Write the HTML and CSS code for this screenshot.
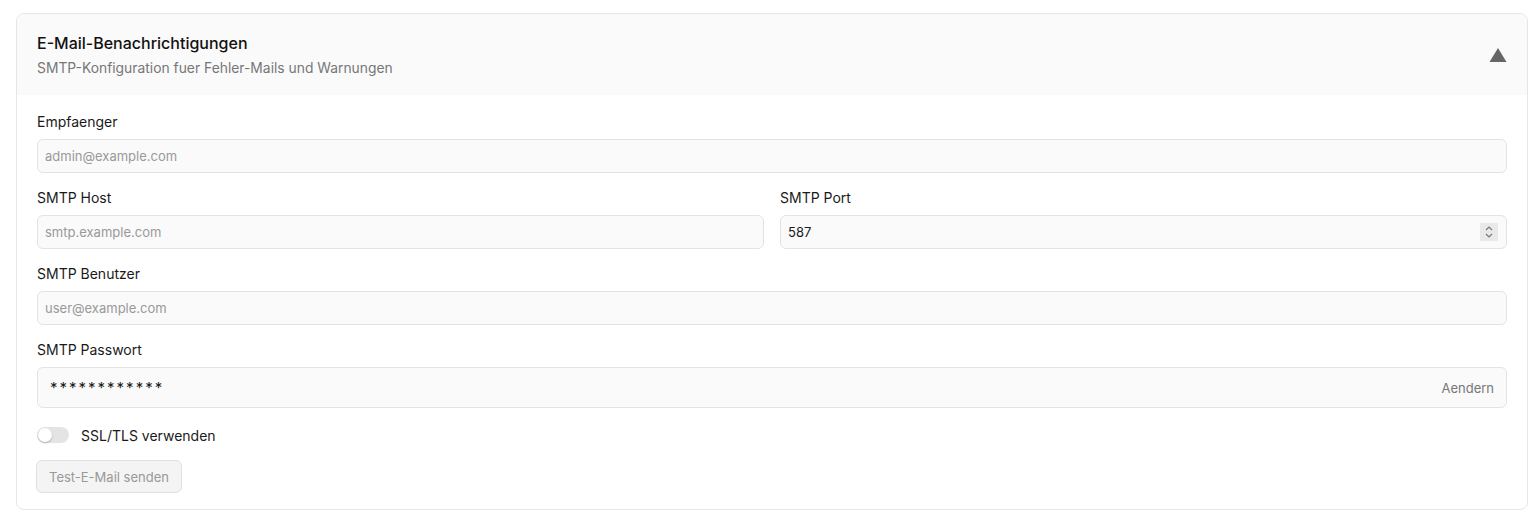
FILE: index.html
```html
<!DOCTYPE html>
<html lang="de">
<head>
<meta charset="utf-8">
<title>E-Mail-Benachrichtigungen</title>
<link rel="stylesheet" href="styles.css">
</head>
<body>
<section class="card">
  <header class="card-head">
    <div class="head-text">
      <h2 class="title">E-Mail-Benachrichtigungen</h2>
      <p class="subtitle">SMTP-Konfiguration fuer Fehler-Mails und Warnungen</p>
    </div>
    <svg class="caret" width="18" height="14" viewBox="0 0 18 14"><polygon points="9,0 17.5,14 0.5,14" fill="#666"/></svg>
  </header>
  <div class="card-body">
    <div class="field">
      <label class="label">Empfaenger</label>
      <div class="input"><span class="ph">admin@example.com</span></div>
    </div>
    <div class="row">
      <div class="field">
        <label class="label">SMTP Host</label>
        <div class="input"><span class="ph">smtp.example.com</span></div>
      </div>
      <div class="field">
        <label class="label">SMTP Port</label>
        <div class="input"><span class="val">587</span>
          <span class="spin"><svg width="10" height="14" viewBox="0 0 10 14"><path d="M2 5 L5 2 L8 5 M2 9 L5 12 L8 9" fill="none" stroke="#777" stroke-width="1.2"/></svg></span>
        </div>
      </div>
    </div>
    <div class="field">
      <label class="label">SMTP Benutzer</label>
      <div class="input"><span class="ph">user@example.com</span></div>
    </div>
    <div class="field">
      <label class="label">SMTP Passwort</label>
      <div class="input pw"><span class="stars">************</span><span class="change">Aendern</span></div>
    </div>
    <div class="toggle-row">
      <span class="toggle"><span class="knob"></span></span>
      <span class="toggle-label">SSL/TLS verwenden</span>
    </div>
    <button class="btn" disabled>Test-E-Mail senden</button>
  </div>
</section>
</body>
</html>
```
FILE: styles.css
```css
* { box-sizing: border-box; }
body {
  margin: 0;
  background: #fff;
  font-family: Inter, "Noto Sans", sans-serif;
  color: #1a1a1a;
  padding: 13px 10px 0 16px;
}
.card {
  border: 1px solid #e6e6e6;
  border-radius: 8px;
  overflow: hidden;
  width: 1512px;
}
.card-head {
  background: #fafafa;
  display: flex;
  align-items: center;
  justify-content: space-between;
  padding: 17px 20px 17px 20px;
  height: 81px;
}
.title {
  margin: 0;
  font-size: 16px;
  font-weight: 500;
  line-height: 22px;
  color: #111;
}
.subtitle {
  margin: 4px 0 0;
  font-size: 13.85px;
  line-height: 20px;
  color: #777;
}
.caret { margin-right: 0; margin-top: 0; }
.card-body {
  padding: 17px 20px 16px 20px;
  display: flex;
  flex-direction: column;
  gap: 15px;
}
.row {
  display: flex;
  gap: 16px;
}
.row .field { flex: 1; }
.field {
  display: flex;
  flex-direction: column;
  gap: 7px;
}
.label {
  font-size: 14px;
  line-height: 20px;
  color: #1a1a1a;
}
.input {
  height: 34px;
  background: #fafafa;
  border: 1px solid #e3e3e3;
  border-radius: 6px;
  display: flex;
  align-items: center;
  padding: 0 7px;
  font-size: 13px;
}
.ph { color: #999; }
.val { color: #1a1a1a; flex: 1; }
.spin {
  width: 18px;
  height: 18px;
  background: #e9e9e9;
  display: flex;
  align-items: center;
  justify-content: center;
  margin-right: 1px;
}
.pw {
  height: 41px;
  padding: 0 12px;
  justify-content: space-between;
}
.stars {
  font-size: 15px;
  letter-spacing: 2px;
  color: #1a1a1a;
}
.change { color: #777; font-size: 13px; }
.toggle-row {
  display: flex;
  align-items: center;
  gap: 12px;
  height: 20px;
  margin-top: 2px;
}
.toggle {
  width: 32px;
  height: 16px;
  border-radius: 8px;
  background: #e4e4e4;
  position: relative;
  display: inline-block;
}
.knob {
  position: absolute;
  left: 1px;
  top: 1px;
  width: 14px;
  height: 14px;
  border-radius: 50%;
  background: #fff;
  box-shadow: 0 1px 2px rgba(0,0,0,0.25);
}
.toggle-label { font-size: 14px; color: #1a1a1a; }
.btn {
  align-self: flex-start;
  height: 33px;
  padding: 0 12px;
  font-family: Inter, "Noto Sans", sans-serif;
  font-size: 13px;
  color: #999;
  background: #f4f4f4;
  border: 1px solid #e0e0e0;
  border-radius: 6px;
  margin-left: -1px;
}
```
